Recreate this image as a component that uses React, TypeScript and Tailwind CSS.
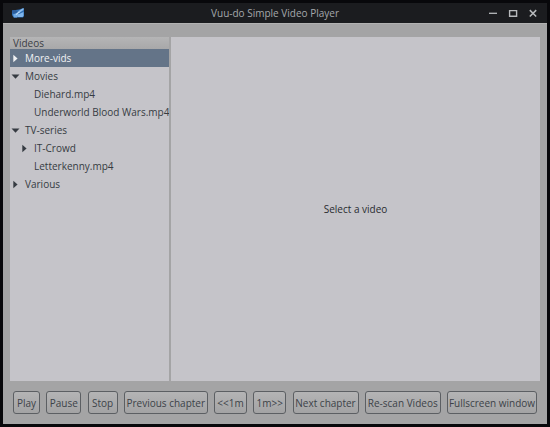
import { useState } from "react";

type Node = { name: string; children?: Node[] };

const library: Node[] = [
  { name: "More-vids", children: [] },
  { name: "Movies", children: [{ name: "Diehard.mp4" }, { name: "Underworld Blood Wars.mp4" }] },
  { name: "TV-series", children: [{ name: "IT-Crowd", children: [] }, { name: "Letterkenny.mp4" }] },
  { name: "Various", children: [] },
];

const controls = [
  { label: "Play", width: "w-[27px]" },
  { label: "Pause", width: "w-[35px]" },
  { label: "Stop", width: "w-[30px]" },
  { label: "Previous chapter", width: "w-[84px]" },
  { label: "<<1m", width: "w-[33px]" },
  { label: "1m>>", width: "w-[33px]" },
  { label: "Next chapter", width: "w-[66px]" },
  { label: "Re-scan Videos", width: "w-[76px]" },
  { label: "Fullscreen window", width: "w-[90px]" },
];

function AppIcon() {
  return (
    <svg className="h-3 w-3" viewBox="0 0 12 12" aria-hidden="true">
      <path d="M0 3.5l7-1 4.5-1.5.5 1v7l-1 1.500H1.500L0 8z" fill="#2f6fb5" />
      <path d="M0 3.5l4-.5 1.500 2L3 6.500H.5z" fill="#2c5c9a" />
      <path d="M6.500 4l5-3v2L7 6z" fill="#8dbdec" />
      <path d="M1 7.500l4-1.500 2 1-2 3.500H2z" fill="#6fa9e4" />
      <path d="M6 7.500l5.500-2.500v4l-1 1H5.500z" fill="#7fb5ec" />
      <path d="M6.500 4.500l1.500.5-3.500 3-1-.5z" fill="#bcd9f5" />
    </svg>
  );
}

function Arrow({ open }: { open: boolean }) {
  return (
    <svg className="h-[9px] w-[9px] shrink-0" viewBox="0 0 9 9" fill="currentColor" aria-hidden="true">
      {open ? <path d="M0.5 2.5h8L4.5 6.8z" /> : <path d="M2.3 0.8L6.6 4.5 2.3 8.2z" />}
    </svg>
  );
}

function TreeRow({ node, nested, selected, onSelect }: { node: Node; nested?: boolean; selected: string; onSelect: (name: string) => void }) {
  const [open, setOpen] = useState(!!node.children?.length);
  const active = selected === node.name;

  return (
    <li>
      <button
        type="button"
        aria-expanded={node.children ? open : undefined}
        onClick={() => {
          onSelect(node.name);
          if (node.children) setOpen(!open);
        }}
        className={`flex h-[18px] w-full items-center gap-[5px] whitespace-nowrap text-left ${nested ? "pl-[10px]" : "pl-px"} ${active ? "bg-[#647488] text-[#f0f1f3]" : "text-[#363b42]"}`}
      >
        {node.children ? <Arrow open={open} /> : <span className="w-[9px] shrink-0" />}
        {node.name}
      </button>
      {open && node.children && (
        <ul>
          {node.children.map((c) => (
            <TreeRow key={c.name} node={c} nested selected={selected} onSelect={onSelect} />
          ))}
        </ul>
      )}
    </li>
  );
}

export default function App() {
  const [selected, setSelected] = useState("More-vids");

  return (
    <div className="flex h-screen flex-col bg-[#08080b] p-[3px] font-['Open_Sans','Noto_Sans',sans-serif] text-[10px] leading-[14px]">
      <header className="flex h-5 shrink-0 items-center bg-[#1b1c1f] px-[9px]">
        <div className="flex-1">
          <AppIcon />
        </div>
        <h1 className="text-[#a5a8ac]">Vuu-do Simple Video Player</h1>
        <div className="flex flex-1 justify-end gap-[10px] text-[#b8babd]">
          <button type="button" aria-label="Minimize">
            <svg className="h-[10px] w-[10px]" viewBox="0 0 10 10" stroke="currentColor" strokeWidth="1.3">
              <path d="M1 5.3h8" />
            </svg>
          </button>
          <button type="button" aria-label="Maximize">
            <svg className="h-[10px] w-[10px]" viewBox="0 0 10 10" fill="none" stroke="currentColor" strokeWidth="1.4">
              <path d="M1.6 2.6h7v5.6h-7z" />
            </svg>
          </button>
          <button type="button" aria-label="Close">
            <svg className="h-[10px] w-[10px]" viewBox="0 0 10 10" stroke="currentColor" strokeWidth="1.5">
              <path d="M1.8 2.1l6.400 6.400M8.200 2.100l-6.400 6.400" />
            </svg>
          </button>
        </div>
      </header>

      <div className="flex min-h-0 flex-1 flex-col border-t border-[#b2b2b2] bg-[#a4a4a5]">
        <main className="mx-[7px] mt-[13px] flex min-h-0 flex-1">
          <nav className="w-[159px] shrink-0 overflow-hidden bg-[#c5c4c9]">
            <h2 className="h-3 bg-linear-to-b from-[#b5b5b6] to-[#a8a8a9] pl-[3px] leading-3 text-[#3c4046]">Videos</h2>
            <ul>
              {library.map((n) => (
                <TreeRow key={n.name} node={n} selected={selected} onSelect={setSelected} />
              ))}
            </ul>
          </nav>
          <section className="ml-[2px] flex flex-1 items-center justify-center bg-[#c5c4c9] text-[#292b2f]">
            <p>Select a video</p>
          </section>
        </main>
        <footer className="flex shrink-0 justify-between px-[10px] pt-[10px] pb-[10px]">
          {controls.map((c) => (
            <button
              key={c.label}
              type="button"
              className={`flex h-[23px] items-center justify-center whitespace-nowrap rounded-[3px] border border-[#5c5f63] bg-linear-to-b from-[#b4b4b5] to-[#a3a3a4] text-[#3c4248] ${c.width}`}
            >
              {c.label}
            </button>
          ))}
        </footer>
      </div>
    </div>
  );
}
